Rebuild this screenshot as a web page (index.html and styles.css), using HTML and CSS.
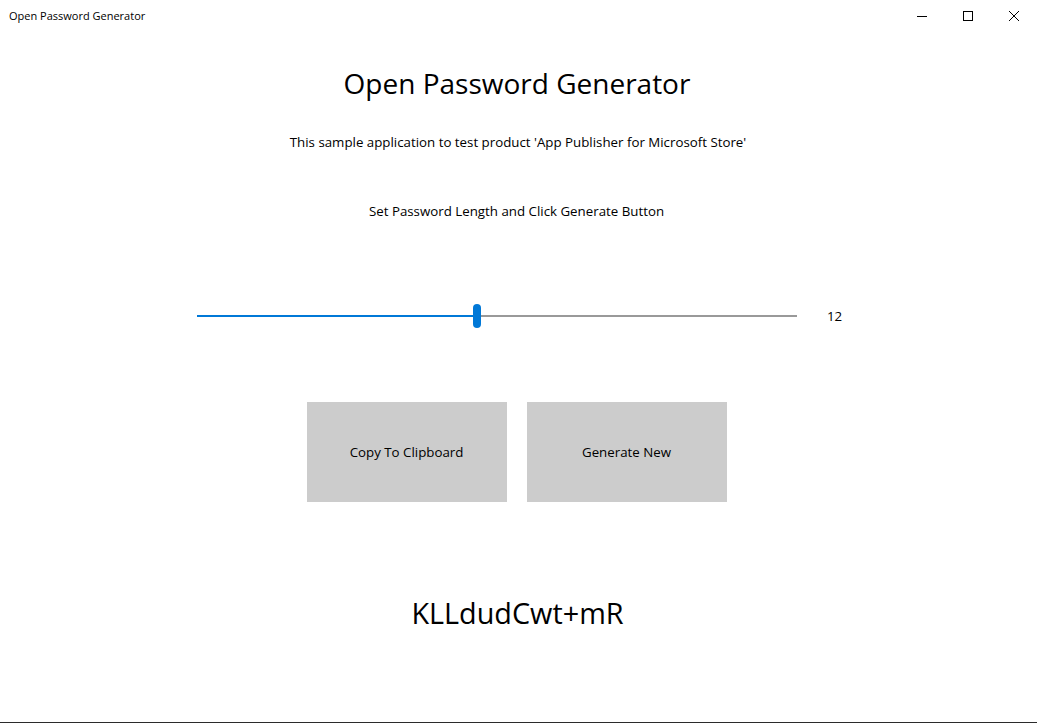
FILE: index.html
```html
<!DOCTYPE html>
<html lang="en">
<head>
<meta charset="utf-8">
<title>Open Password Generator</title>
<link rel="stylesheet" href="styles.css">
</head>
<body>
<div class="window">
  <header class="titlebar">
    <span class="app-title">Open Password Generator</span>
    <div class="controls">
      <span class="ctrl"><svg width="10" height="10" viewBox="0 0 10 10"><path d="M0 5.5H10" stroke="#000" stroke-width="1"/></svg></span>
      <span class="ctrl"><svg width="10" height="10" viewBox="0 0 10 10"><rect x="0.5" y="0.5" width="9" height="9" fill="none" stroke="#000" stroke-width="1"/></svg></span>
      <span class="ctrl"><svg width="10" height="10" viewBox="0 0 10 10"><path d="M0 0L10 10M10 0L0 10" stroke="#000" stroke-width="1"/></svg></span>
    </div>
  </header>
  <main class="content">
    <h1 class="heading">Open Password Generator</h1>
    <p class="subtitle">This sample application to test product 'App Publisher for Microsoft Store'</p>
    <p class="instruction">Set Password Length and Click Generate Button</p>
    <div class="slider-row">
      <div class="slider">
        <div class="track-fill"></div>
        <div class="thumb"></div>
        <div class="track-rest"></div>
      </div>
      <span class="value">12</span>
    </div>
    <div class="buttons">
      <button class="btn">Copy To Clipboard</button>
      <button class="btn">Generate New</button>
    </div>
    <div class="password">KLLdudCwt+mR</div>
  </main>
</div>
</body>
</html>
```

FILE: styles.css
```css
html, body {
  margin: 0;
  padding: 0;
  background: #fff;
}
body {
  font-family: "Segoe UI", "Open Sans", "Noto Sans", sans-serif;
  color: #000;
}
.window {
  width: 1037px;
  height: 723px;
  box-sizing: border-box;
  border-bottom: 1px solid #2b2b2b;
  display: flex;
  flex-direction: column;
}
.titlebar {
  height: 32px;
  display: flex;
  align-items: center;
  justify-content: space-between;
}
.app-title {
  font-size: 11px;
  padding-left: 9px;
  margin-top: -1px;
}
.controls {
  display: flex;
  height: 32px;
}
.ctrl {
  width: 46px;
  height: 32px;
  display: flex;
  align-items: center;
  justify-content: center;
}
.ctrl svg { display: block; }
.content {
  display: flex;
  flex-direction: column;
  align-items: center;
}
.heading {
  font-weight: 400;
  font-size: 28px;
  margin: 31px 0 0;
  line-height: 40px;
  margin-left: -3px;
}
.subtitle {
  font-size: 13.3px;
  margin: 29px 0 0;
  line-height: 20px;
  margin-left: -1px;
}
.instruction {
  font-size: 13.3px;
  margin: 49px 0 0;
  line-height: 20px;
  margin-left: -4px;
}
.slider-row {
  margin-top: 83px;
  display: flex;
  align-items: center;
  width: 1037px;
  padding-left: 197px;
  box-sizing: border-box;
  height: 24px;
}
.slider {
  width: 600px;
  height: 24px;
  display: flex;
  align-items: center;
}
.track-fill {
  width: 276px;
  height: 2px;
  background: #0078d7;
}
.thumb {
  width: 8px;
  height: 24px;
  border-radius: 4px;
  background: #0078d7;
}
.track-rest {
  flex: 1;
  height: 2px;
  background: #999;
}
.value {
  font-size: 13.3px;
  margin-left: 30px;
  line-height: 20px;
}
.buttons {
  margin-top: 74px;
  display: flex;
  gap: 20px;
  margin-left: -4px;
}
.btn {
  width: 200px;
  height: 100px;
  border: none;
  background: #ccc;
  font-family: inherit;
  font-size: 13.3px;
  color: #000;
  padding: 0;
}
.password {
  font-size: 28.8px;
  margin-top: 91px;
  line-height: 40px;
  margin-left: -2px;
}
```
